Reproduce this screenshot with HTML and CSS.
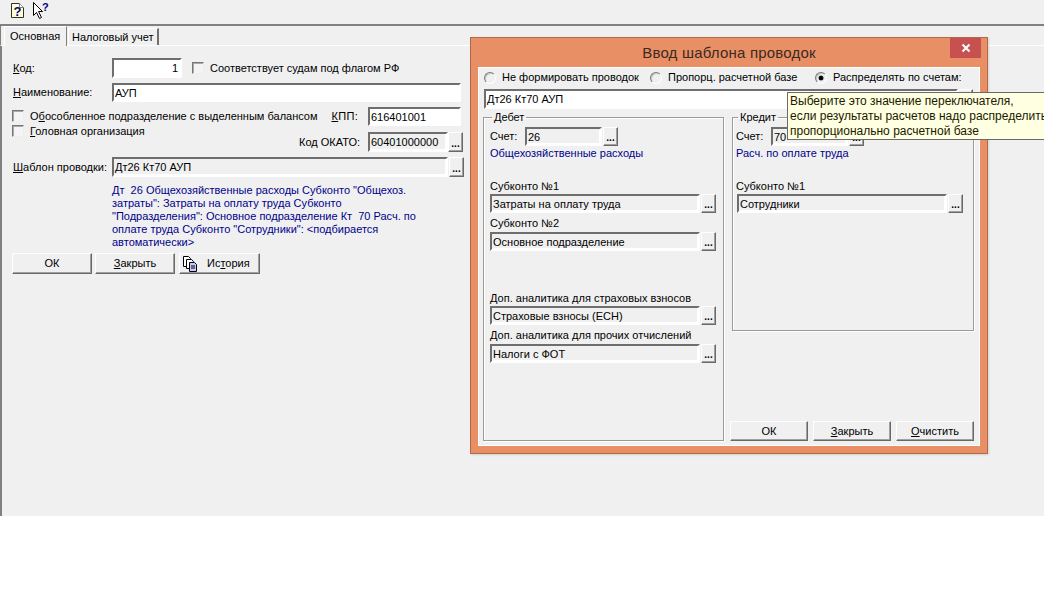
FILE: index.html
```html
<!DOCTYPE html>
<html lang="ru">
<head>
<meta charset="utf-8">
<title>Ввод шаблона проводок</title>
<link rel="stylesheet" href="styles.css">
</head>
<body>
<div class="app">
  <div class="toolbar">
    <svg class="ico-help" width="13" height="15" viewBox="0 0 13 15"><path d="M.5.5h8l4 4v10H.5z" fill="#ffffd0" stroke="#303030"/><path d="M8.5.5v4h4" fill="#fff" stroke="#808080"/><text x="2.5" y="12.5" class="qm">?</text></svg>
    <svg class="ico-what" width="16" height="18" viewBox="0 0 16 18"><path d="M.5.5v13l3-3 3 6 2-1-3-6h4z" fill="#fff" stroke="#000"/><text x="9" y="9" class="qm-small">?</text></svg>
  </div>
  <div class="tabs">
    <div class="tab tab-active">Основная</div>
    <div class="tab">Налоговый учет</div>
  </div>
  <div class="form">
    <div class="row row-kod">
      <label class="lab"><u>К</u>од:</label>
      <div class="field field-white field-kod num">1</div>
      <span class="check check-kod"></span>
      <span class="txt">Соответствует судам под флагом РФ</span>
    </div>
    <div class="row row-name">
      <label class="lab"><u>Н</u>аименование:</label>
      <div class="field field-white field-name">АУП</div>
    </div>
    <div class="split">
      <div class="checks">
        <div class="check-row"><span class="check"></span><span class="txt">О<u>б</u>особленное подразделение с выделенным балансом</span></div>
        <div class="check-row check-row-2"><span class="check"></span><span class="txt"><u>Г</u>оловная организация</span></div>
      </div>
      <div class="codes">
        <div class="code-row"><label class="code-lab code-lab-kpp"><u>К</u>ПП:</label><div class="field field-white field-code">616401001</div></div>
        <div class="code-row code-row-2"><label class="code-lab">Код ОКАТО:</label><div class="field field-okato">60401000000</div><span class="dots">...</span></div>
      </div>
    </div>
    <div class="row row-tpl">
      <label class="lab"><u>Ш</u>аблон проводки:</label>
      <div class="field field-tpl">Дт26 Кт70 АУП</div><span class="dots">...</span>
    </div>
    <p class="desc">Дт&nbsp; 26 Общехозяйственные расходы Субконто "Общехоз.<br>затраты": Затраты на оплату труда Субконто<br>"Подразделения": Основное подразделение Кт&nbsp; 70 Расч. по<br>оплате труда Субконто "Сотрудники": &lt;подбирается<br>автоматически&gt;</p>
    <div class="btns">
      <button class="btn btn-main">ОК</button>
      <button class="btn btn-main"><u>З</u>акрыть</button>
      <button class="btn btn-main btn-hist">
        <svg width="14" height="16" viewBox="0 0 14 16"><path d="M.5.5h5l2 2v8h-7z" fill="#fff" stroke="#000"/><path d="M3.5 3.5h5l2 2v7h-7z" fill="#fff" stroke="#000"/><path d="M6.5 6.5h5l2 2v7h-7z" fill="#c8c8ff" stroke="#000"/><path d="M8 10h4M8 12h4" stroke="#000"/></svg>
        <span>Ис<u>т</u>ория</span>
      </button>
    </div>
  </div>

  <div class="dialog">
    <div class="title">Ввод шаблона проводок<span class="close"><svg width="10" height="10" viewBox="0 0 10 10"><path d="M1.5 1.5l7 7M8.5 1.5l-7 7" stroke="#fff" stroke-width="2"/></svg></span></div>
    <div class="dlg-body">
      <div class="radios">
        <span class="radio"></span><span class="r-txt r1">Не формировать проводок</span>
        <span class="radio"></span><span class="r-txt r2">Пропорц. расчетной базе</span>
        <span class="radio radio-on"></span><span class="r-txt">Распределять по счетам:</span>
      </div>
      <div class="tpl-row"><div class="field field-white field-dlgname">Дт26 Кт70 АУП</div><span class="dots">...</span></div>
      <div class="groups">
        <fieldset class="group group-deb">
          <legend>Дебет</legend>
          <div class="acc"><span class="acc-lab">Счет:</span><div class="field field-acc">26</div><span class="dots">...</span></div>
          <div class="blue">Общехозяйственные расходы</div>
          <div class="cap cap-s1">Субконто №1</div>
          <div class="sel"><div class="field field-sel">Затраты на оплату труда</div><span class="dots">...</span></div>
          <div class="cap">Субконто №2</div>
          <div class="sel sel-low"><div class="field field-sel">Основное подразделение</div><span class="dots">...</span></div>
          <div class="cap cap-dop">Доп. аналитика для страховых взносов</div>
          <div class="sel"><div class="field field-sel">Страховые взносы (ЕСН)</div><span class="dots">...</span></div>
          <div class="cap">Доп. аналитика для прочих отчислений</div>
          <div class="sel sel-low"><div class="field field-sel">Налоги с ФОТ</div><span class="dots">...</span></div>
        </fieldset>
        <div class="right-col">
          <fieldset class="group group-cred">
            <legend>Кредит</legend>
            <div class="acc"><span class="acc-lab">Счет:</span><div class="field field-acc">70</div><span class="dots">...</span></div>
            <div class="blue">Расч. по оплате труда</div>
            <div class="cap cap-s1">Субконто №1</div>
            <div class="sel"><div class="field field-sel">Сотрудники</div><span class="dots">...</span></div>
          </fieldset>
          <div class="dlg-btns">
            <button class="btn btn-dlg">ОК</button>
            <button class="btn btn-dlg"><u>З</u>акрыть</button>
            <button class="btn btn-dlg"><u>О</u>чистить</button>
          </div>
        </div>
      </div>
    </div>
    <div class="tooltip">Выберите это значение переключателя,<br>если результаты расчетов надо распределить<br>пропорционально расчетной базе</div>
  </div>
</div>
</body>
</html>
```
FILE: styles.css
```css
* { box-sizing: border-box; }
html, body { margin: 0; padding: 0; background: #fff; overflow: hidden; }
body { width: 1044px; height: 614px; font: 11px/13px "Liberation Sans", Arial, sans-serif; color: #000; }
u { text-decoration: underline; }
.app { position: relative; width: 1044px; height: 516px; background: #f0f0f0; overflow: hidden; }

.toolbar { height: 24px; display: flex; align-items: flex-start; padding: 2px 0 0 11px; gap: 9px; }
.ico-help { margin-top: 1px; }
.qm { font: bold 13px "Liberation Sans", sans-serif; fill: #000080; }
.qm-small { font: bold 11px "Liberation Sans", sans-serif; fill: #000080; }

.tabs { display: flex; height: 22px; border-top: 2px solid #808080; padding: 1px 0 0 3px; align-items: flex-end; border-left: 1px solid #808080; border-bottom: 1px solid #fff; }
.tab { height: 17px; width: 91px; padding: 2px 0 0 3px; border: 1px solid #fff; border-right: 2px solid #707070; border-bottom: 0; }
.tab-active { height: 20px; width: 63px; padding: 3px 0 0 5px; position: relative; top: 1px; background: #f0f0f0; border-right: 1px solid #808080; margin-right: 1px; }

.form { height: 470px; border-left: 2px solid #808080; padding: 12px 0 0 10px; width: 480px; }
.row { display: flex; align-items: center; }
.lab { width: 100px; padding-left: 1px; }
.field { height: 20px; border: 2px solid; border-color: #6e6e6e #fff #fff #6e6e6e; padding: 2px 0 0 1px; white-space: nowrap; overflow: hidden; background: #f0f0f0; box-shadow: inset -1px -1px 0 #fff; }
.field-white { background: #fff; }
.num { text-align: right; padding-right: 2px; }
.field-kod { width: 70px; }
.check { width: 12px; height: 12px; border: 1px solid; border-color: #777 #eee #eee #777; background: #f4f4f4; flex: none; display: block; box-shadow: inset 1px 1px 0 #aaa; }
.check-kod { margin: 0 6px 0 10px; }
.row-name { margin-top: 5px; height: 19px; }
.field-name { width: 349px; height: 19px; }
.split { display: flex; height: 50px; margin-top: 5px; }
.checks { width: 356px; padding-top: 3px; }
.check-row { display: flex; gap: 6px; height: 12px; align-items: center; white-space: nowrap; }
.check-row-2 { margin-top: 3px; }
.codes { display: flex; flex-direction: column; margin-left: -69px; width: 164px; }
.code-row { display: flex; align-items: center; height: 19px; }
.code-row-2 { margin-top: 6px; height: 20px; }
.code-lab { width: 69px; text-align: right; padding-right: 8px; flex: none; white-space: nowrap; }
.code-lab-kpp { padding-right: 10px; letter-spacing: .3px; }
.field-code { width: 93px; height: 19px; }
.field-okato { width: 80px; }
.dots { width: 15px; height: 20px; flex: none; display: flex; justify-content: center; align-items: flex-end; padding-bottom: 3px; line-height: 9px; font-weight: bold; font-size: 10px; border: 1px solid; border-color: #fff #696969 #696969 #fff; background: #f0f0f0; box-shadow: inset -1px -1px 0 #a0a0a0; }
.row-tpl { height: 20px; }
.field-tpl { width: 336px; }
.row-tpl .dots { margin-left: 1px; }
.desc { margin: 7px 0 0 100px; color: #00008b; line-height: 13px; white-space: nowrap; }
.btns { display: flex; margin-top: 4px; gap: 3px; }
.btn { font: inherit; color: #000; height: 21px; background: #f0f0f0; padding: 0; border: 1px solid; border-color: #fff #696969 #696969 #fff; box-shadow: inset -1px -1px 0 #a0a0a0; border-radius: 0; }
.btn-main { width: 80px; }
.btn-hist { display: flex; align-items: center; justify-content: flex-start; padding-left: 3px; gap: 10px; width: 81px; margin-left: 1px; }

.dialog { position: absolute; left: 470px; top: 37px; width: 518px; height: 417px; background: #e98f66; border: 1px solid #b06a48; box-shadow: 1px 1px 2px rgba(0,0,0,.12); padding: 0 7px 7px; }
.title { position: relative; height: 29px; text-align: center; font-size: 15px; line-height: 30px; color: #3a2a20; letter-spacing: .2px; }
.close { position: absolute; right: -1px; top: 0; width: 31px; height: 20px; background: #c75050; display: flex; align-items: center; justify-content: center; }
.dlg-body { background: #f0f0f0; border: 1px solid #fff; height: 379px; padding: 3px 0 0 5px; }
.radios { display: flex; align-items: center; height: 13px; }
.radio { width: 12px; height: 12px; border-radius: 50%; border: 1px solid; border-color: #7a7a7a #fff #fff #7a7a7a; background: #f0f0f0; box-shadow: inset 1px 1px 0 #c8c8c8; margin-right: 6px; flex: none; position: relative; }
.radio-on::after { content: ""; position: absolute; left: 3px; top: 3px; width: 4px; height: 4px; border-radius: 50%; background: #000; box-shadow: 0 0 0 .5px #333; }
.r-txt { white-space: nowrap; }
.r1 { width: 148px; }
.r2 { width: 147px; }
.tpl-row { display: flex; margin-top: 5px; width: 489px; }
.field-dlgname { width: 474px; height: 20px; }
.groups { display: flex; margin: 2px 0 0 -1px; gap: 8px; }
.group { margin: 0; padding: 0 0 0 6px; border: 1px solid #9a9a9a; box-shadow: 1px 1px 0 #fff, inset 1px 1px 0 #fff; min-inline-size: 0; display: block; }
.group legend { padding: 0 2px; margin-left: 2px; line-height: 13px; height: 13px; }
.group-deb { width: 241px; height: 330px; }
.group-cred { width: 242px; height: 220px; padding-left: 3px; }
.group-cred .sel { margin-left: 1px; width: 226px; }
.group-cred .field-sel { width: 211px; }
.acc { display: flex; align-items: center; height: 19px; margin-top: 3px; }
.acc-lab { width: 35px; flex: none; }
.field-acc { width: 77px; height: 19px; }
.acc .dots { height: 19px; margin-left: 1px; }
.blue { color: #00008b; margin-top: 1px; height: 13px; }
.cap { height: 13px; margin-top: 4px; white-space: nowrap; }
.cap-s1 { margin-top: 20px; }
.cap-dop { margin-top: 41px; }
.sel { display: flex; margin-top: 1px; height: 19px; width: 226px; }
.sel-low { margin-top: 2px; }
.field-sel { width: 210px; height: 19px; }
.sel .dots { height: 19px; margin-left: 1px; }
.right-col { display: flex; flex-direction: column; width: 242px; }
.dlg-btns { display: flex; gap: 5px; margin: 90px 0 0 -2px; }
.btn-dlg { width: 78px; height: 20px; }

.tooltip { position: absolute; left: 316px; top: 54px; width: 270px; height: 48px; background: #ffffe1; border: 1px solid #6a6a6a; border-right: 0; padding: 1px 0 0 2px; font-size: 12px; line-height: 15px; color: #1a1a00; white-space: nowrap; }
```
